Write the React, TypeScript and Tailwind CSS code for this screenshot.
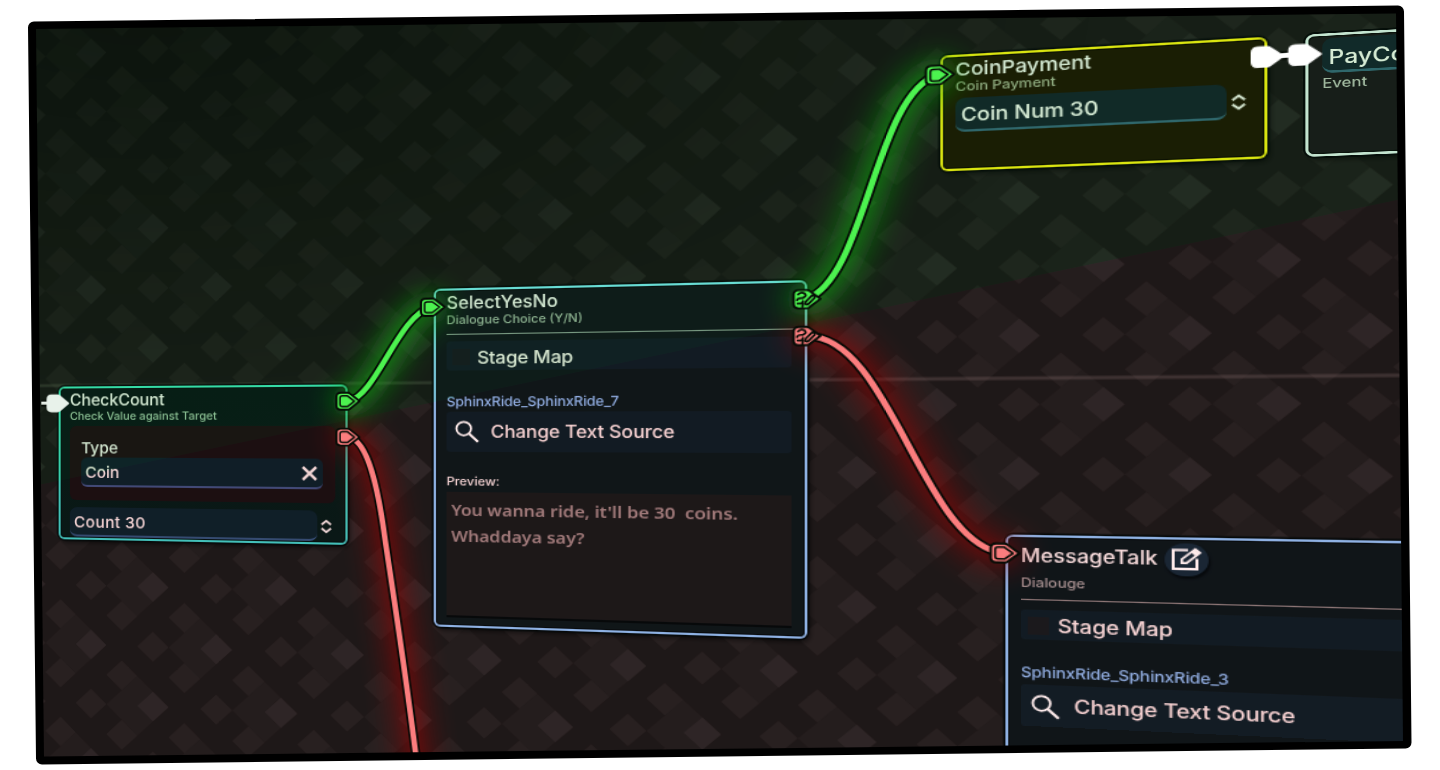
import React from "react";

/* Perspective shared by every layer of the tilted graph canvas. */
const plane =
  "absolute left-0 top-0 h-[900px] w-[1200px] origin-top-left [transform:matrix3d(1,-0.077818,0,-0.000181818,0,1,0,0,0,0,1,0,0,0,0,1)]";

const HALF_X = 59.25;
const HALF_Y = 58.15;
const CELL_X = HALF_X / 4;
const CELL_Y = HALF_Y / 4;

function cell(x: number, y: number, i: number, j: number) {
  const cx = x + i * CELL_X;
  const cy = y + j * CELL_Y;
  return `M${cx - CELL_X} ${cy}L${cx} ${cy - CELL_Y}L${cx + CELL_X} ${cy}L${cx} ${cy + CELL_Y}Z`;
}

function Tiles() {
  let bright = "";
  let soft = "";
  let faint = "";
  for (let i = -1; i < 21; i++) {
    for (let j = -2; j < 15; j++) {
      if ((i + j) % 2 !== 0) continue;
      const x = 89.5 + i * HALF_X;
      const y = 59.4 + j * HALF_Y;
      bright += cell(x, y, 0, 0);
      soft += cell(x, y, -2, -2) + cell(x, y, -2, 2) + cell(x, y, -4, 0);
      faint += cell(x, y, -1, -1) + cell(x, y, -1, 1) + cell(x, y, -2, 0);
    }
  }
  return (
    <svg className="absolute left-0 top-0 h-full w-full overflow-visible" viewBox="0 0 1200 900">
      <path d={faint} fill="#fff" fillOpacity=".024" />
      <path d={soft} fill="#ffe4ec" fillOpacity=".042" />
      <path d={bright} fill="#ffe8f2" fillOpacity=".07" />
      <path d="M0 386H1200" stroke="#ffe0e0" strokeOpacity=".13" strokeWidth="3" />
    </svg>
  );
}

function Spinner() {
  return (
    <svg className="h-[14px] w-[10px] shrink-0" viewBox="0 0 10 14" fill="none" stroke="#f0e8e8" strokeWidth="1.9">
      <path d="M.8 5.2 5 1.8l4.2 3.4M.8 8.8 5 12.2l4.2-3.4" />
    </svg>
  );
}

function Search() {
  return (
    <svg className="h-[21px] w-[21px] shrink-0" viewBox="0 0 20 21" fill="none" stroke="#fff" strokeWidth="1.8">
      <circle cx="7.2" cy="7.6" r="6.2" />
      <path d="m11.7 12.2 7.6 7.6" strokeWidth="2.2" />
    </svg>
  );
}

function EditIcon() {
  return (
    <svg className="h-[20px] w-[22px]" viewBox="0 0 22 20" fill="none" stroke="#fff" strokeWidth="2">
      <path d="M12 2.6H2V18h16V9.5" />
      <path d="M7.8 13.2V10L16.9 1.6l3.2 3L11 13.2Z" strokeWidth="1.7" />
      <path d="m15.4 3.3 3.1 3" strokeWidth="3.4" />
    </svg>
  );
}

const cardShadow = "shadow-[0_0_0_1.5px_#050808,2px_3px_4px_rgba(0,0,0,0.55)]";
const font = "font-['Inter','Liberation_Sans',sans-serif] font-medium whitespace-pre leading-none";

function CheckCount() {
  return (
    <div className={`absolute left-[58px] top-[387px] h-[151px] w-[268.5px] rounded-[6px] bg-gradient-to-b from-[#3de2bc] to-[#43cfc8] p-[2px] ${cardShadow}`}>
      <div className="flex h-full flex-col rounded-[4px] bg-gradient-to-b from-[#081a15] to-[#0a1917] pl-[9px] shadow-[inset_0_0_0_1px_#06100f]">
        <div className="mt-[4px] flex h-[16px] items-center text-[15.5px] tracking-[-0.15px] text-[#f4f0f0]">CheckCount</div>
        <div className="mt-px flex h-[15px] items-center text-[10.7px] text-[#a0c4a8]">Check Value against Target</div>
        <div className="mt-px flex h-[73px] w-[247px] flex-col rounded-[6px] bg-[#1c1012] px-[11px]">
          <div className="mt-[11px] flex h-[20px] items-center text-[15px] text-[#f4eeee]">Type</div>
          <div className="flex h-[29px] w-[225px] items-center justify-between rounded-[6px] border-b-2 border-[#424f80] bg-[#10202a] pl-[4px] pr-[5px] text-[15px] text-[#f6e8e8]">
            <span className="pt-[2px]">Coin</span>
            <svg className="h-[14px] w-[14px]" viewBox="0 0 14 14" stroke="#f0e4e4" strokeWidth="2.5">
              <path d="m1 1 12 12M13 1 1 13" />
            </svg>
          </div>
        </div>
        <div className="mt-[7px] flex items-center gap-[3px]">
          <div className="flex h-[29px] w-[231px] items-center rounded-[7px] border-b-2 border-[#35517a] bg-[#10212b] pl-[4px] pt-px text-[15px] tracking-[0.35px] text-[#f6e6e6]">Count 30</div>
          <Spinner />
        </div>
      </div>
    </div>
  );
}

function SelectYesNo() {
  return (
    <div className={`absolute left-[402px] top-[299px] h-[312.5px] w-[302px] rounded-[6px] bg-gradient-to-b from-[#79e4f4] via-[#8dbff6] via-35% to-[#8ec0f6] p-[2px] ${cardShadow}`}>
      <div className="flex h-full flex-col rounded-[4px] bg-[#10171a] pl-[9px] pr-[10px] shadow-[inset_0_0_0_1px_#080b0d]">
        <div className="mt-[3px] flex h-[17px] items-center text-[15.4px] text-[#f4f0f0]">SelectYesNo</div>
        <div className="mt-px flex h-[15px] items-center text-[10.7px] text-[#a4b8a6]">Dialogue Choice (Y/N)</div>
        <div className="mt-[4px] h-px w-[288px] bg-[#8c9c94]" />
        <div className="mt-[6px] flex h-[27px] items-center rounded-[3px] bg-[#121d25] pt-[2px] text-[16px] text-[#f6ecec]">
          <span className="ml-[5px] mr-[6px] h-[15px] w-[15px] bg-[#171b20]" />
          <span className="tracking-[-0.25px]">Stage Map</span>
        </div>
        <div className="mt-[21px] flex h-[15px] items-center text-[12px] tracking-[-0.17px] text-[#90baf2]">SphinxRide_SphinxRide_7</div>
        <div className="mt-[2px] flex h-[37px] items-center rounded-[3px] bg-[#121d25] pl-[6.5px] text-[15.8px] tracking-[-0.15px] text-[#f6e2e2]">
          <Search />
          <span className="ml-[10px]">Change Text Source</span>
        </div>
        <div className="mt-[20px] flex h-[15px] items-center text-[11px] text-[#f2e2e2]">Preview:</div>
        <div className="mt-[2px] h-[116px] border-b-2 border-[#07090a] bg-[#1d191a] pl-[4px] pt-[3.5px] font-['Noto_Sans',sans-serif] text-[15px] font-semibold leading-[24px] tracking-[-0.1px] text-[#9f8282]">
          {"You wanna ride, it'll be 30  coins.\nWhaddaya say?"}
        </div>
      </div>
    </div>
  );
}

function CoinPayment() {
  return (
    <div className={`absolute left-[803px] top-[110px] h-[99px] w-[226.5px] rounded-[6px] bg-[#fcec10] p-[2px] ${cardShadow}`}>
      <div className="flex h-full flex-col rounded-[4px] bg-[#1e1902] pl-[9px] shadow-[inset_0_0_0_1px_#0c0a00]">
        <div className="mt-[3px] flex h-[16px] items-center text-[15.2px] text-[#f8f4f4]">CoinPayment</div>
        <div className="flex h-[15px] items-center text-[10.8px] text-[#a8b294]">Coin Payment</div>
        <div className="mt-px flex items-center gap-[2.5px]">
          <div className="flex h-[29px] w-[189px] items-center rounded-[7px] border-b-2 border-[#36667a] bg-[#13262a] pl-[4px] pt-[3px] text-[15.8px] tracking-[-0.1px] text-[#f8f4f4]">Coin Num 30</div>
          <Spinner />
        </div>
      </div>
    </div>
  );
}

function PayCard() {
  return (
    <div className={`absolute left-[1055px] top-[110px] h-[99px] w-[227px] rounded-[6px] bg-[#e2ecee] p-[2px] ${cardShadow}`}>
      <div className="flex h-full flex-col rounded-[4px] bg-[#1a1a1a] pl-[9px] shadow-[inset_0_0_0_1px_#0c0e0c]">
        <div className="mt-[2px] flex h-[28px] w-[180px] items-center rounded-[7px] border-b-2 border-[#36667a] bg-[#13262c] pl-[4px] pt-[3px] text-[16px] text-[#f8f4f4]">PayCo</div>
        <div className="mt-[2px] flex h-[14px] items-center text-[10.8px] text-[#b8bcb4]">Event</div>
      </div>
    </div>
  );
}

function MessageTalk() {
  return (
    <div className={`absolute left-[850px] top-[517.5px] h-[312px] w-[302px] rounded-[6px] bg-[#8fc0f6] p-[2px] ${cardShadow}`}>
      <div className="flex h-full flex-col rounded-[4px] bg-[#10161a] pl-[9px] shadow-[inset_0_0_0_1px_#080b0d]">
        <div className="mt-[3px] flex h-[27px] items-center text-[15.3px] text-[#f8eeee]">
          <span className="w-[99.5px]">MessageTalk</span>
          <span className="flex h-[27px] w-[30px] items-center justify-center rounded-full bg-[#1a2938] shadow-[1px_2px_2px_#06090c]">
            <EditIcon />
          </span>
        </div>
        <div className="mt-[3px] flex h-[14px] items-center text-[10.8px] text-[#a89c9c]">Dialouge</div>
        <div className="mt-[5px] h-px bg-[#8c7e7e]" />
        <div className="mt-[8px] flex h-[25px] items-center rounded-[3px] bg-[#121d25] pt-[3px] text-[15.8px] tracking-[-0.15px] text-[#f6e4e4]">
          <span className="ml-[5px] mr-[6px] h-[15px] w-[15px] bg-[#1b1b1e]" />
          <span>Stage Map</span>
        </div>
        <div className="mt-[20.5px] flex h-[15px] items-center text-[12px] tracking-[-0.17px] text-[#90baf2]">SphinxRide_SphinxRide_3</div>
        <div className="mt-[3px] flex h-[35px] items-center rounded-[3px] bg-[#131e27] pl-[6.5px] pt-px text-[15.8px] tracking-[-0.17px] text-[#f6e2e2]">
          <Search />
          <span className="ml-[10px]">Change Text Source</span>
        </div>
      </div>
    </div>
  );
}

const GREEN = "#4cf24f";
const RED = "#fb7d7e";

function Wire({ d, color, glow, strength }: { d: string; color: string; glow: string; strength: number }) {
  return (
    <g fill="none" strokeLinecap="round">
      <path d={d} stroke={glow} strokeOpacity={strength} strokeWidth="31" filter="url(#wide)" />
      <path d={d} stroke={glow} strokeOpacity={strength / 2} strokeWidth="14" filter="url(#tight)" />
      <path d={d} stroke="#040804" strokeWidth="8.2" />
      <path d={d} stroke={color} strokeWidth="4.8" />
    </g>
  );
}

const PORT = "M-6 -8H0Q1.2 -8 2 -7.2L10.5 0L2 7.2Q1.2 8 0 8H-6Q-10 8 -10 4V-4Q-10 -8 -6 -8Z";

function Port({ x, y, color, kind }: { x: number; y: number; color: string; kind?: "choice" | "solid" }) {
  return (
    <g transform={`translate(${x} ${y})`} strokeLinejoin="round" strokeLinecap="round">
      <path d={PORT} fill={color} stroke={kind === "solid" ? color : "#060c06"} strokeWidth={kind === "solid" ? 1.6 : 1.9} />
      {!kind && <path d="M-4.6 -5H-.2L6 0L-.2 5H-4.6Q-6.8 5 -6.8 3V-3Q-6.8 -5 -4.6 -5Z" fill={color} stroke="#060c06" strokeWidth="1.5" />}
      {kind === "choice" && (
        <g fill="none" stroke="#060c06" strokeWidth="1.7">
          <path d="M-6.5 -4.2Q-4 -7 -1.3 -4.6Q.4 -2.5 -3 -1Q-7 -1.4 -7.3 .8M-6.8 3.8H-3.6L-2.8 1.6M-3.2 6.5L-2.6 3.7" />
          <path d="M-.8 4.5Q-1.6 2.8 0 1.4L4.2 -3.2Q6.8 -3.2 6 -.8L1.8 3.8Q.6 5.2 -.8 4.5Z" />
        </g>
      )}
    </g>
  );
}

function Wires() {
  return (
    <svg className="absolute left-0 top-0 h-full w-full overflow-visible" viewBox="0 0 1200 900">
      <defs>
        <filter id="wide" filterUnits="userSpaceOnUse" x="0" y="0" width="1200" height="900">
          <feGaussianBlur stdDeviation="11" />
        </filter>
        <filter id="tight" filterUnits="userSpaceOnUse" x="0" y="0" width="1200" height="900">
          <feGaussianBlur stdDeviation="5" />
        </filter>
      </defs>
      <Wire d="M328 436.6C345 440 354 485 360 533C368 590 380 670 391 770" color={RED} glow="#a01010" strength={0.4} />
      <Wire d="M704 347.8C766 349 790 526 848 533.7" color={RED} glow="#a01010" strength={0.4} />
      <Wire d="M328 402.6C352 398 372 322 400 315.8" color={GREEN} glow="#12a015" strength={0.5} />
      <Wire d="M703 315.5C748 300 755 140 801 126.4" color={GREEN} glow="#12a015" strength={0.5} />
      <path d="M41 403.3H50" stroke="#060c06" strokeWidth="6.5" />
      <path d="M41 403.3H50" stroke="#e8f0e8" strokeWidth="3" />
      <path d="M1038 126H1050" stroke="#060c06" strokeWidth="7.4" />
      <path d="M1038 126H1050" stroke="#fff" strokeWidth="4" />
      <Port x={57} y={403.6} color="#e8f2ea" kind="solid" />
      <Port x={327} y={402.8} color={GREEN} />
      <Port x={327} y={436.6} color={RED} />
      <Port x={401} y={316} color={GREEN} />
      <Port x={703.5} y={315.6} color={GREEN} kind="choice" />
      <Port x={703.5} y={347.8} color={RED} kind="choice" />
      <Port x={802.5} y={126.4} color={GREEN} />
      <Port x={1029.8} y={126.3} color="#ffffff" kind="solid" />
      <Port x={1054.5} y={126.3} color="#ffffff" kind="solid" />
      <Port x={849.5} y={533.8} color={RED} />
    </svg>
  );
}

export default function App() {
  return (
    <main className={`relative h-[770px] w-[1440px] overflow-hidden bg-white ${font}`}>
      <svg className="absolute inset-0 h-full w-full" viewBox="0 0 1440 770">
        <path d="M34 27.5L1398 11.5L1405.5 742.5L42 758.5Z" fill="#000" stroke="#000" strokeWidth="12" strokeLinejoin="round" />
      </svg>
      <div className="absolute inset-0 isolate bg-[#1e1919] [clip-path:polygon(36px_29px,1396px_13.5px,1403px_741px,44px_756.5px)]">
        <div className={plane}>
          <Tiles />
        </div>
        <div className="absolute inset-0 bg-[#d4fddc] mix-blend-multiply [clip-path:polygon(0_0,1440px_0,1440px_191px,0_493px)]" />
        <div className="absolute inset-0 bg-[radial-gradient(ellipse_950px_420px_at_10%_0%,rgba(0,0,0,0.45),rgba(0,0,0,0))]" />
        <div className={plane}>
          <CheckCount />
          <SelectYesNo />
          <CoinPayment />
          <PayCard />
          <MessageTalk />
        </div>
        <div className="absolute inset-0 bg-[#dcf6de] mix-blend-multiply [clip-path:polygon(0_0,1440px_0,1440px_191px,0_493px)]" />
        <div className="absolute inset-0 bg-[#000602] mix-blend-screen [clip-path:polygon(0_0,1440px_0,1440px_191px,0_493px)]" />
        <div className="absolute inset-0 bg-[#ffecec] mix-blend-multiply [clip-path:polygon(0_493px,1440px_191px,1440px_770px,0_770px)]" />
        <div className={plane}>
          <Wires />
        </div>
      </div>
    </main>
  );
}
